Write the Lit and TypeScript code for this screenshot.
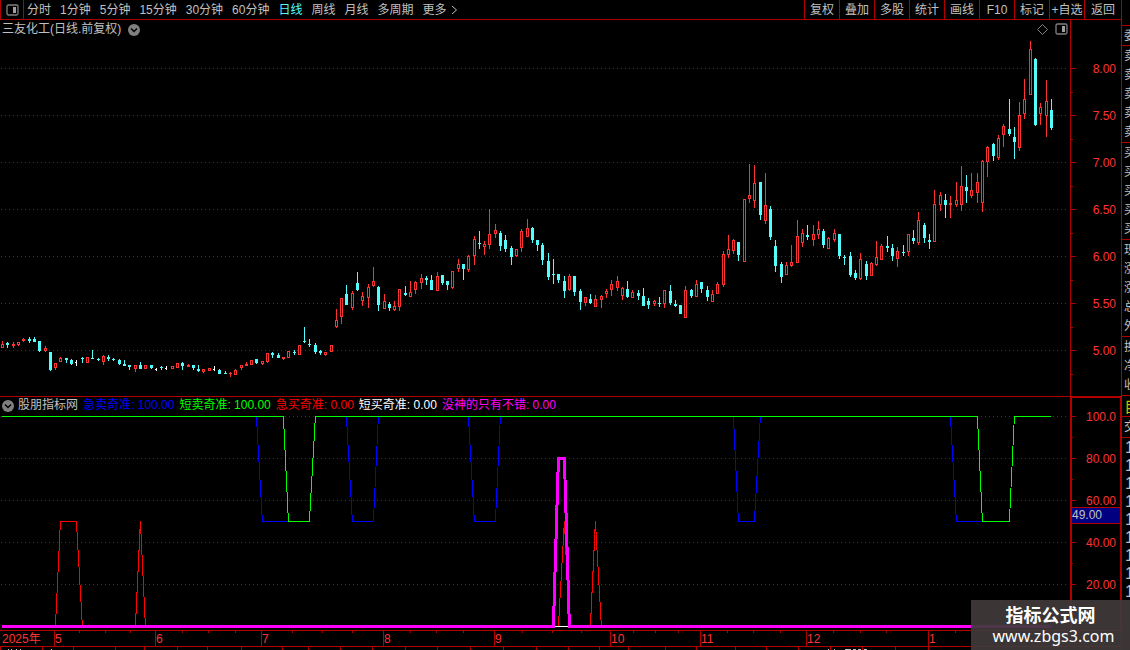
import { LitElement, html, svg, css } from 'lit';
import { classMap } from 'lit/directives/class-map.js';
import { customElement, property, state } from 'lit/decorators.js';

type Point = [index: number, value: number];

interface Series {
  name: string;
  label: string;
  value: string;
  points: Point[];
}

// kind (r = up, c = down, w = flat), then high, body top, body bottom, low
const CANDLES = `
r341,344,348,348 c342,343,345,348 r342,344,346,348 r342,342,345,346 r338,339,341,342 c337,339,341,343
c337,339,342,342 c341,341,351,352 r346,348,351,352 c352,352,370,371 r363,363,368,370 r357,358,362,362
c358,358,360,363 c359,360,364,365 w360,362,363,366 c357,358,359,363 r357,357,363,363 c350,358,359,359
c358,359,360,361 r355,356,362,365 c355,357,359,361 c358,359,360,361 c359,360,364,365 c360,364,366,366
c365,365,367,370 r365,365,369,372 c362,365,369,369 r365,365,369,369 c365,365,368,369 w368,369,370,371
c366,367,368,370 w366,368,369,370 r366,366,369,369 r363,363,368,368 c362,363,366,370 r364,365,367,367
c365,365,368,370 c365,369,371,372 r369,369,372,373 r368,368,371,371 w366,369,370,371 c369,370,374,374
c371,373,374,374 r372,373,374,377 r369,370,375,375 r365,365,368,370 r362,364,366,366 r360,360,365,365
c359,359,363,364 r361,361,364,365 r353,353,362,363 c352,353,355,358 c353,355,358,358 r357,357,359,360
r351,351,358,358 c350,352,353,355 r345,345,355,355 c327,341,342,343 c339,344,345,347 c343,345,352,354
c350,351,353,355 r352,352,355,356 r345,345,352,352 r309,320,327,328 r298,298,317,324 c285,294,305,305
r291,293,308,310 c272,283,290,291 r292,296,301,306 r284,287,298,308 r267,281,286,287 c286,287,305,311
r294,301,309,309 c302,304,308,311 r301,306,310,311 r289,289,307,311 c286,293,295,296 r281,292,297,297
r281,282,290,294 r274,278,283,289 c276,278,280,285 c275,280,290,290 r272,276,291,291 c275,275,283,285
c281,281,285,290 r271,271,288,289 r259,264,269,272 c264,264,269,280 r255,256,270,272 r236,239,256,265
c231,243,244,249 r241,244,247,255 r209,234,245,249 r224,230,234,238 c231,233,246,251 c235,240,249,252
c246,248,257,265 r249,249,256,257 r229,231,248,252 r219,228,237,237 c227,228,240,243 c240,240,245,251
c243,245,260,265 c253,261,277,280 c259,274,275,284 c274,274,280,283 c276,281,291,298 r274,276,290,291
c276,276,292,296 c289,291,302,310 r297,297,303,306 c294,299,303,304 r295,299,307,307 r295,296,300,308
r289,291,294,298 r280,284,290,296 r276,281,288,291 r287,288,296,300 c281,289,297,298 r290,292,298,298
c290,293,296,300 c288,296,306,306 c298,301,305,309 r300,301,304,306 c297,303,304,307 r290,290,304,308
c285,291,303,305 c300,304,306,307 c305,305,314,314 r286,290,318,318 c289,290,296,298 r280,284,297,297
c282,282,289,293 c286,290,297,301 r290,294,302,302 r282,284,294,294 r251,254,285,287 r235,249,255,258
r239,240,251,254 c242,242,255,261 r199,199,262,262 r164,195,199,203 r165,183,201,208 c182,182,215,220
r173,205,221,224 c206,209,237,240 c240,246,266,272 c262,264,277,283 r262,265,275,275 r245,262,266,267
r220,236,263,263 r229,233,243,247 c225,235,237,240 r225,234,240,246 r221,229,235,239 c229,231,245,248
r237,238,249,249 r229,233,240,242 c234,234,256,259 c255,257,258,265 c252,256,275,277 c270,273,278,280
r253,259,279,280 c261,264,276,280 r262,263,276,276 r241,257,265,266 r244,246,260,260 c236,246,248,252
c244,248,256,261 r247,251,259,267 c245,252,253,256 r234,234,252,256 c230,238,241,244 r212,220,243,245
c223,225,238,243 c234,240,242,249 r190,204,242,242 r192,195,205,211 c194,200,205,218 r196,203,205,218
r182,200,205,207 r166,186,205,211 c175,187,191,203 r173,190,196,198 r173,182,193,203 r160,161,203,212
r146,147,162,177 c143,144,156,161 r135,138,158,160 r124,126,135,147 c99,129,134,136 c127,137,142,159
r102,115,148,151 r79,99,114,119 r41,49,95,95 c58,59,125,126 r103,107,114,125 r80,101,116,137
c99,110,128,130`
  .trim()
  .split(/\s+/)
  .map((entry) => ({ kind: entry[0], y: entry.slice(1).split(',').map(Number) }));

const LAST = CANDLES.length - 1;

const SERIES: Series[] = [
  {
    name: 'blue',
    label: '急卖奇准',
    value: '100.00',
    points: [
      [0, 100], [48, 100], [49, 50], [58, 50], [59, 100], [65, 100], [66, 50], [70, 50], [71, 100],
      [88, 100], [89, 50], [93, 50], [94, 100], [138, 100], [139, 50], [142, 50], [143, 100],
      [179, 100], [180, 50], [190, 50], [191, 100], [LAST, 100],
    ],
  },
  {
    name: 'green',
    label: '短卖奇准',
    value: '100.00',
    points: [
      [0, 100], [53, 100], [54, 50], [58, 50], [59, 100], [184, 100], [185, 50], [190, 50],
      [191, 100], [LAST, 100],
    ],
  },
  {
    name: 'red',
    label: '急买奇准',
    value: '0.00',
    points: [
      [0, 0], [10, 0], [11, 50], [14, 50], [15, 0], [25, 0], [26, 50], [27, 0], [105, 0], [106, 50],
      [107, 0], [111, 0], [112, 50], [113, 0], [LAST, 0],
    ],
  },
  { name: 'white', label: '短买奇准', value: '0.00', points: [[0, 0], [LAST, 0]] },
  {
    name: 'magenta',
    label: '没神的只有不错',
    value: '0.00',
    points: [[0, 0], [104, 0], [105, 80], [106, 80], [107, 0], [LAST, 0]],
  },
];

const MONTHS: [number, string][] = [
  [54, '5'], [155, '6'], [261, '7'], [383, '8'], [494, '9'], [610, '10'], [700, '11'], [806, '12'], [928, '1'],
];

const WEEKS = [
  79, 105, 130, 182, 208, 235, 292, 322, 352, 410, 436, 463, 522, 552, 581, 633, 655, 678, 727, 753, 780,
  833, 860, 886, 955,
];

const LOWER_TICKS = [
  0, 42, 73, 115, 144, 177, 207, 241, 282, 308, 340, 372, 405, 437, 470, 503, 536, 568, 599, 628, 665, 696,
  735, 766, 798, 830, 862, 895, 928,
];

// tips of the row that starts below the window edge
const TIPS = [8, 11, 16, 20, 51, 828, 834, 845, 848, 853, 858, 864];

const barX = (index: number) => Math.floor(2.7 + index * 5.2965);

const chevron = svg`
  <circle cx="6" cy="6" r="6" fill="#808080"/>
  <path d="M3 4.5 6 7.5 9 4.5" fill="none" stroke="#000" stroke-width="1.5"/>`;

const panelIcon = html`
  <svg width="13" height="13" viewBox="0 0 13 13" aria-hidden="true">
    <rect x="1" y="1" width="11" height="10" rx="1.5" fill="none" stroke="#808080" stroke-width="1.3"/>
    <rect x="7" y="3" width="3" height="6" fill="#a0a0a0"/>
  </svg>`;

@customElement('chart-toolbar')
class ChartToolbar extends LitElement {
  static styles = css`
    :host {
      display: flex;
      justify-content: space-between;
      box-sizing: border-box;
      height: 20px;
      border-bottom: 1px solid #b00000;
    }
    button {
      appearance: none;
      border: 0;
      padding: 1px 0 0;
      background: none;
      color: #c0c0c0;
      font: inherit;
      line-height: 18px;
      white-space: nowrap;
      cursor: pointer;
    }
    .periods,
    .tools {
      display: flex;
    }
    .periods {
      gap: 9px;
    }
    .layout {
      display: flex;
      justify-content: center;
      align-items: center;
      box-sizing: border-box;
      width: 24px;
      margin-right: -6px;
      border: solid #b00000;
      border-width: 0 1px;
    }
    .selected {
      color: #54fcfc;
    }
    .more {
      display: flex;
      align-items: center;
      gap: 4px;
    }
    .tool {
      box-sizing: border-box;
      width: 35px;
      border-left: 1px solid #b00000;
    }
    .tool:last-child {
      width: 37px;
    }
  `;

  @property({ type: Array })
  periods: string[] = ['分时', '1分钟', '5分钟', '15分钟', '30分钟', '60分钟', '日线', '周线', '月线', '多周期'];

  @property({ type: Array })
  tools: string[] = ['复权', '叠加', '多股', '统计', '画线', 'F10', '标记', '+自选', '返回'];

  @state()
  _selected = '日线';

  render() {
    return html`
      <div class="periods">
        <button class="layout" aria-label="布局">${panelIcon}</button>
        ${this.periods.map((period) => html`
          <button class="${classMap({ selected: period === this._selected })}"
                  @click="${() => (this._selected = period)}">${period}</button>
        `)}
        <button class="more">
          更多
          <svg width="7" height="10" viewBox="0 0 7 10" aria-hidden="true">
            <path d="M1 1 5.5 5 1 9" fill="none" stroke="#c0c0c0"/>
          </svg>
        </button>
      </div>
      <div class="tools">${this.tools.map((tool) => html`<button class="tool">${tool}</button>`)}</div>
    `;
  }
}

const paneStyles = css`
  :host {
    display: block;
    position: relative;
  }
  .chart {
    display: block;
    width: 100%;
    shape-rendering: crispEdges;
  }
  .heading {
    position: absolute;
    top: 0;
    left: 2px;
    right: 53px;
    display: flex;
    align-items: center;
    height: 19px;
    line-height: 19px;
    white-space: nowrap;
  }
  .icon {
    display: flex;
    appearance: none;
    border: 0;
    padding: 0;
    background: none;
    cursor: pointer;
  }
  .frame {
    fill: #b00000;
  }
  .grid {
    stroke: #b00000;
    stroke-dasharray: 1 3;
  }
  .scale {
    fill: #ff3232;
    text-anchor: end;
  }
`;

@customElement('price-pane')
class PricePane extends LitElement {
  static styles = [
    paneStyles,
    css`
      .heading {
        gap: 7px;
      }
      .corner {
        display: flex;
        gap: 6px;
        margin-left: auto;
      }
      .r {
        fill: #ff3232;
      }
      .c {
        fill: #54fcfc;
      }
      .w {
        fill: #fff;
      }
      .hollow {
        fill: #000;
      }
    `,
  ];

  private renderCandle(kind: string, [high, top, bottom, low]: number[], index: number) {
    const x = barX(index);
    return svg`
      <g class="${kind}">
        <rect x="${x}" y="${high}" width="1" height="${low - high}"/>
        <rect x="${x - 1}" y="${top}" width="${kind === 'w' ? 2 : 3}" height="${bottom - top}"/>
        ${kind === 'r' && bottom - top > 2
          ? svg`<rect class="hollow" x="${x}" y="${top + 1}" width="1" height="${bottom - top - 2}"/>`
          : ''}
      </g>`;
  }

  render() {
    const levels = [0, 1, 2, 3, 4, 5, 6].map((step) => ({ y: 68 + step * 47, text: (8 - step / 2).toFixed(2) }));
    return html`
      <svg class="chart" viewBox="0 20 1121 376" role="img" aria-label="三友化工 日线">
        ${levels.map(({ y, text }) => svg`
          <line class="grid" x1="1" x2="1067" y1="${y + 0.5}" y2="${y + 0.5}"/>
          <rect class="frame" x="1070" y="${y}" width="6" height="1"/>
          <rect class="frame" x="1070" y="${y + 24}" width="3" height="1"/>
          <text class="scale" x="1116" y="${y + 5}">${text}</text>
        `)}
        <rect class="frame" x="1070" y="20" width="1" height="376"/>
        ${CANDLES.map(({ kind, y }, index) => this.renderCandle(kind, y, index))}
      </svg>
      <div class="heading">
        <span>三友化工(日线.前复权)</span>
        <button class="icon" aria-label="选项"><svg width="12" height="12">${chevron}</svg></button>
        <div class="corner">
          <button class="icon" aria-label="标注">
            <svg width="13" height="13"><path d="M6.5 1.5 11.5 6.5 6.5 11.5 1.5 6.5Z" fill="none" stroke="#808080"/></svg>
          </button>
          <button class="icon" aria-label="侧栏">${panelIcon}</button>
        </div>
      </div>
    `;
  }
}

@customElement('indicator-pane')
class IndicatorPane extends LitElement {
  static styles = [
    paneStyles,
    css`
      .heading {
        gap: 5px;
      }
      .icon {
        margin-right: -1px;
      }
      .line {
        fill: none;
        stroke: currentColor;
      }
      .line.magenta {
        stroke-width: 3px;
      }
      .blue {
        color: #0000ff;
      }
      .green {
        color: #00ff00;
      }
      .red {
        color: #ff0000;
      }
      .white {
        color: #fff;
      }
      .magenta {
        color: #ff00ff;
      }
      .cursor {
        fill: #000080;
      }
      .cursor-text {
        fill: #c0c0c0;
      }
    `,
  ];

  private path(points: Point[]) {
    return points.map(([index, value]) => `${barX(index) + 0.4},${626.5 - value * 2.1}`).join(' ');
  }

  render() {
    const levels = [100, 80, 60, 40, 20].map((value) => ({ y: 626 - value * 2.1, value }));
    return html`
      <svg class="chart" viewBox="0 396 1121 234" role="img" aria-label="股朋指标网">
        <rect class="frame" x="0" y="396" width="1121" height="1"/>
        <rect class="frame" x="1070" y="396" width="51" height="2"/>
        <rect class="frame" x="1070" y="396" width="2" height="234"/>
        <rect class="frame" x="1120" y="396" width="1" height="234"/>
        ${levels.map(({ y, value }) => svg`
          <line class="grid" x1="1" x2="1067" y1="${y + 0.5}" y2="${y + 0.5}"/>
          <rect class="frame" x="1070" y="${y}" width="6" height="1"/>
          <rect class="frame" x="1070" y="${y + 21}" width="3" height="1"/>
          <text class="scale" x="1116" y="${y + 5}">${value === 100 ? '100.0' : value.toFixed(2)}</text>
        `)}
        <rect class="frame" x="1072" y="507" width="48" height="17"/>
        <rect class="cursor" x="1072" y="508" width="48" height="15"/>
        <text class="cursor-text" x="1072" y="519">49.00</text>
        ${SERIES.map(({ name, points }) => svg`<polyline class="line ${name}" points="${this.path(points)}"/>`)}
      </svg>
      <div class="heading">
        <button class="icon" aria-label="选项"><svg width="12" height="12">${chevron}</svg></button>
        <span>股朋指标网</span>
        ${SERIES.map(({ name, label, value }) => html`<span class="${name}">${label}: ${value}</span>`)}
      </div>
    `;
  }
}

@customElement('time-axis')
class TimeAxis extends LitElement {
  static styles = css`
    :host {
      display: block;
    }
    .axis {
      display: block;
      width: 100%;
      shape-rendering: crispEdges;
    }
    .rule {
      fill: #b00000;
    }
    .label {
      fill: #ff3232;
    }
    .tip {
      fill: #c0c0c0;
    }
  `;

  render() {
    return html`
      <svg class="axis" viewBox="0 0 1121 20" role="img" aria-label="时间轴">
        <rect class="rule" width="1121" height="1"/>
        <rect class="rule" y="16" width="1121" height="1"/>
        <text class="label" x="2" y="13">2025年</text>
        ${MONTHS.map(([x, month]) => svg`
          <rect class="rule" x="${x}" width="1" height="16"/>
          <text class="label" x="${x + 1}" y="13">${month}</text>
        `)}
        ${WEEKS.map((x) => svg`<rect class="rule" x="${x}" width="1" height="3"/>`)}
        ${LOWER_TICKS.map((x) => svg`<rect class="rule" x="${x}" y="17" width="1" height="3"/>`)}
        ${TIPS.map((x) => svg`<rect class="tip" x="${x}" y="19" width="${x > 840 ? 3 : 1}" height="1"/>`)}
      </svg>
    `;
  }
}

@customElement('quote-strip')
class QuoteStrip extends LitElement {
  static styles = css`
    :host {
      display: block;
      overflow: hidden;
      border-left: 1px solid #b00000;
      padding-top: 25px;
    }
    .group {
      border-top: 1px solid #b00000;
      padding: 1px 0 0 2px;
    }
    .row {
      width: 14px;
      line-height: 19px;
    }
    .group:first-child .row {
      line-height: 18px;
    }
    .watch {
      color: #c0c000;
      font-size: 16px;
    }
    .group.ticks {
      padding-left: 3px;
      font-size: 16px;
    }
    .ticks .row {
      line-height: 18px;
    }
  `;

  private groups = ['委', '卖卖卖卖卖', '买买买买买', '现涨涨总外', '换净收'];

  render() {
    return html`
      ${this.groups.map((group) => html`
        <div class="group">${[...group].map((char) => html`<div class="row">${char}</div>`)}</div>
      `)}
      <div class="group watch"><div class="row">自</div></div>
      <div class="group"><div class="row">交</div></div>
      <div class="group ticks">${[...'111111111'].map((char) => html`<div class="row">${char}</div>`)}</div>
    `;
  }
}

@customElement('app-root')
class AppRoot extends LitElement {
  static styles = css`
    :host {
      display: grid;
      grid-template-columns: minmax(0, 1fr) 9px;
      position: relative;
      min-height: 100vh;
      overflow: hidden;
      background: #000;
      color: #c0c0c0;
      font: 12px 'Liberation Sans', 'Noto Sans CJK SC', sans-serif;
    }
    .watermark {
      position: absolute;
      right: 0;
      bottom: 0;
      box-sizing: border-box;
      width: 159px;
      height: 50px;
      padding-top: 2px;
      background: rgba(64, 58, 58, 0.92);
      color: #fff;
      text-align: center;
    }
    .site {
      font: bold 18px/24px 'Noto Sans CJK SC', sans-serif;
    }
    .url {
      padding-left: 6px;
      font: 16px/20px 'Noto Sans', sans-serif;
    }
  `;

  render() {
    return html`
      <main>
        <chart-toolbar></chart-toolbar>
        <price-pane></price-pane>
        <indicator-pane></indicator-pane>
        <time-axis></time-axis>
      </main>
      <quote-strip></quote-strip>
      <div class="watermark">
        <div class="site">指标公式网</div>
        <div class="url">www.zbgs3.com</div>
      </div>
    `;
  }
}
